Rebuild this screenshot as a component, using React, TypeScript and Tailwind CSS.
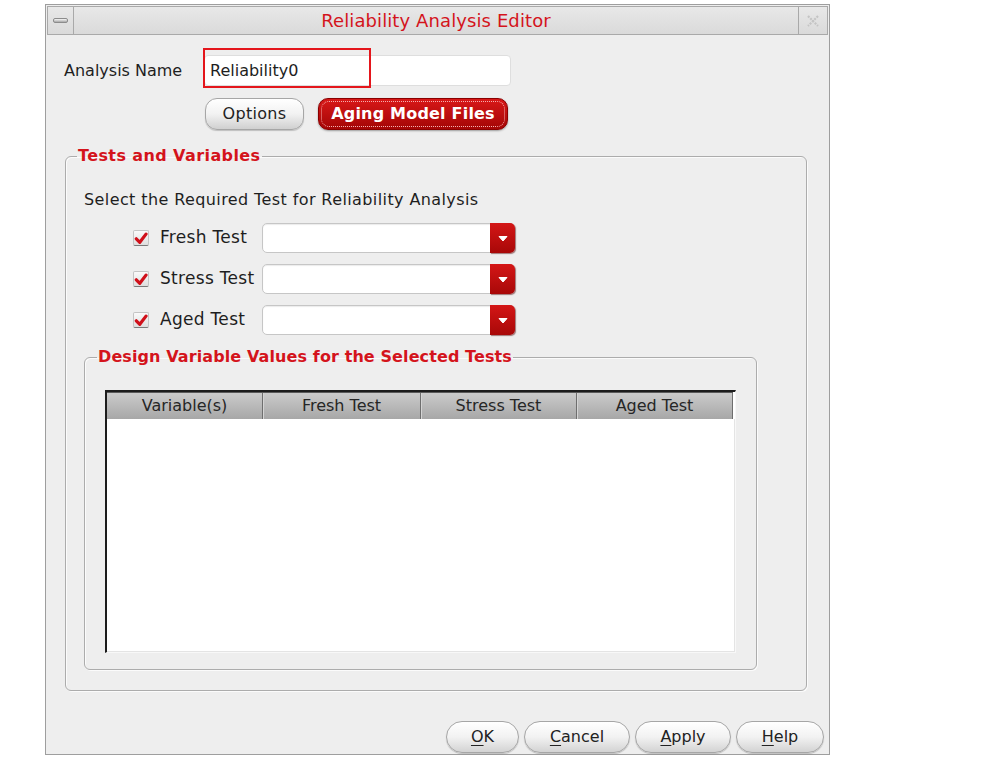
import React from 'react'

function PillButton({ label, width }: { label: string; width: string }) {
  return (
    <button
      className={`${width} h-[32px] rounded-full border border-[#a6a6a6] bg-linear-to-b from-white via-[#f2f2f2] to-[#d3d3d3] text-[16px] text-[#222] shadow-[0_1px_1px_rgba(0,0,0,0.2)]`}
    >
      <span className="underline underline-offset-[3px]">{label[0]}</span>
      {label.slice(1)}
    </button>
  )
}

function CheckBox() {
  return (
    <div className="w-[16px] h-[16px] rounded-[2px] border border-[#c4c4c4] border-b-[#7a7a7a] bg-linear-to-b from-[#fafafa] to-[#dedede] flex items-center justify-center">
      <svg width="15" height="15" viewBox="0 0 14 14">
        <path d="M2.3 7.3 L5.8 10.8 L12 2.6" fill="none" stroke="#d0101a" strokeWidth="3.2" strokeLinecap="round" strokeLinejoin="round" />
      </svg>
    </div>
  )
}

function TestRow({ name }: { name: string }) {
  return (
    <div className="h-[30px] ml-[49px] flex items-center">
      <CheckBox />
      <span className="ml-[11px] w-[102px] text-[17px] tracking-[0.3px]">{name}</span>
      <div className="w-[253px] h-[30px] rounded-[5px] border border-[#c6c6c6] bg-white flex justify-end shadow-[inset_0_1px_1px_rgba(0,0,0,0.08)]">
        <div className="w-[25px] -my-px -mr-px rounded-r-[5px] bg-linear-to-b from-[#d41616] to-[#a80808] shadow-[1px_1px_1px_rgba(80,0,0,0.5)] flex items-center justify-center">
          <svg width="10" height="7" viewBox="0 0 10 7">
            <path d="M1 1.5 L9 1.5 L5 6 Z" fill="#ffffff" stroke="#ffffff" strokeWidth="1" strokeLinejoin="round" />
          </svg>
        </div>
      </div>
    </div>
  )
}

export default function App() {
  const columns = ['Variable(s)', 'Fresh Test', 'Stress Test', 'Aged Test']

  return (
    <div className="min-h-screen bg-white font-['DejaVu_Sans',sans-serif] text-[#1e1e1e]">
      <div className="ml-[45px] pt-[4px]">
        <div className="w-[785px] h-[751px] border border-[#9e9e9e] bg-[#eeeeee] flex flex-col">
          {/* title bar */}
          <div className="h-[29px] mx-px mt-px flex border border-[#a9a9a9] bg-linear-to-b from-[#e8e8e8] to-[#dadada]">
            <div className="w-[26px] border-r border-[#a9a9a9] flex items-center justify-center">
              <div className="w-[15px] h-[5px] rounded-[2px] border border-[#8c8c8c] bg-linear-to-b from-[#f8f8f8] to-[#a8a8a8]" />
            </div>
            <div className="flex-1 text-center text-[18px] leading-[27px] tracking-[0.1px] text-[#d4141c]">Reliability Analysis Editor</div>
            <div className="w-[29px] border-l border-[#a9a9a9] flex items-center justify-center">
              <svg width="14" height="14" viewBox="0 0 14 14">
                <path d="M2 2 L12 12 M12 2 L2 12" stroke="#c4c4c4" strokeWidth="2.2" strokeDasharray="2 1.2" fill="none" />
              </svg>
            </div>
          </div>

          <div className="pl-[18px] pr-[5px] flex flex-col">
            {/* analysis name */}
            <div className="mt-[20px] flex items-center h-[31px]">
              <span className="w-[140px] text-[16px]">Analysis Name</span>
              <div className="relative w-[307px] h-[31px] rounded-[4px] border border-[#dedede] bg-white flex items-center pl-[5px] text-[16px]">
                Reliability0
                <div className="absolute left-[-2px] top-[-8px] w-[168px] h-[40px] border-2 border-[#e4161c]" />
              </div>
            </div>

            {/* options buttons */}
            <div className="mt-[12px] ml-[141px] flex gap-[14px]">
              <button className="w-[99px] h-[32px] rounded-[12px] border border-[#a6a6a6] bg-linear-to-b from-white via-[#f2f2f2] to-[#d0d0d0] text-[16px] tracking-[0.3px] text-[#222] shadow-[0_1px_1px_rgba(0,0,0,0.2)]">
                Options
              </button>
              <button className="w-[190px] h-[32px] rounded-[10px] border border-[#8a0000] bg-linear-to-b from-[#d81818] to-[#a40606] p-[2px] shadow-[0_1px_2px_rgba(0,0,0,0.35)]">
                <div className="h-full rounded-[8px] border border-dotted border-[#f4b0b0] flex items-center justify-center text-[16px] tracking-[0.2px] font-bold text-white">
                  Aging Model Files
                </div>
              </button>
            </div>

            {/* tests and variables */}
            <fieldset className="mt-[16px] ml-px w-[742px] h-[545px] rounded-[6px] border border-[#acacac] shadow-[inset_1px_1px_0_#fbfbfb,1px_1px_0_#fbfbfb] px-[18px]">
              <legend className="-ml-[7px] px-[1px] text-[16px] leading-[20px] tracking-[0.4px] font-bold text-[#d4141c]">Tests and Variables</legend>
              <div className="mt-[24px] text-[16px] leading-[20px] tracking-[0.4px]">Select the Required Test for Reliability Analysis</div>
              <div className="mt-[13px] flex flex-col gap-[11px]">
                <TestRow name="Fresh Test" />
                <TestRow name="Stress Test" />
                <TestRow name="Aged Test" />
              </div>

              <fieldset className="mt-[12px] w-[673px] h-[323px] rounded-[6px] border border-[#acacac] shadow-[inset_1px_1px_0_#fbfbfb,1px_1px_0_#fbfbfb] px-[20px]">
                <legend className="-ml-[8px] px-[1px] text-[16px] leading-[20px] tracking-[0.1px] font-bold text-[#d4141c]">Design Variable Values for the Selected Tests</legend>
                <div className="mt-[23px] w-[631px] h-[263px] border-t-2 border-l-2 border-[#1c1c1c] border-r border-b border-r-[#f8f8f8] border-b-[#f8f8f8] bg-white flex flex-col">
                  <div className="h-[27px] mr-[2px] grid grid-cols-[156px_158px_156px_1fr] border-t border-[#5a5a5a] bg-linear-to-b from-[#cbcbcb] to-[#a7a7a7]">
                    {columns.map((c, i) => (
                      <div
                        key={c}
                        className={`flex items-center justify-center text-[16px] text-[#262626] ${i < 3 ? 'border-r border-[#6e6e6e] shadow-[1px_0_0_#d4d4d4]' : 'border-r border-[#6e6e6e]'}`}
                      >
                        {c}
                      </div>
                    ))}
                  </div>
                  <div className="flex-1 border-r border-b border-[#e4e4e4]" />
                </div>
              </fieldset>
            </fieldset>

            {/* dialog buttons */}
            <div className="mt-[30px] flex justify-end gap-[5px]">
              <PillButton label="OK" width="w-[73px]" />
              <PillButton label="Cancel" width="w-[106px]" />
              <PillButton label="Apply" width="w-[96px]" />
              <PillButton label="Help" width="w-[88px]" />
            </div>
          </div>
        </div>
      </div>
    </div>
  )
}
